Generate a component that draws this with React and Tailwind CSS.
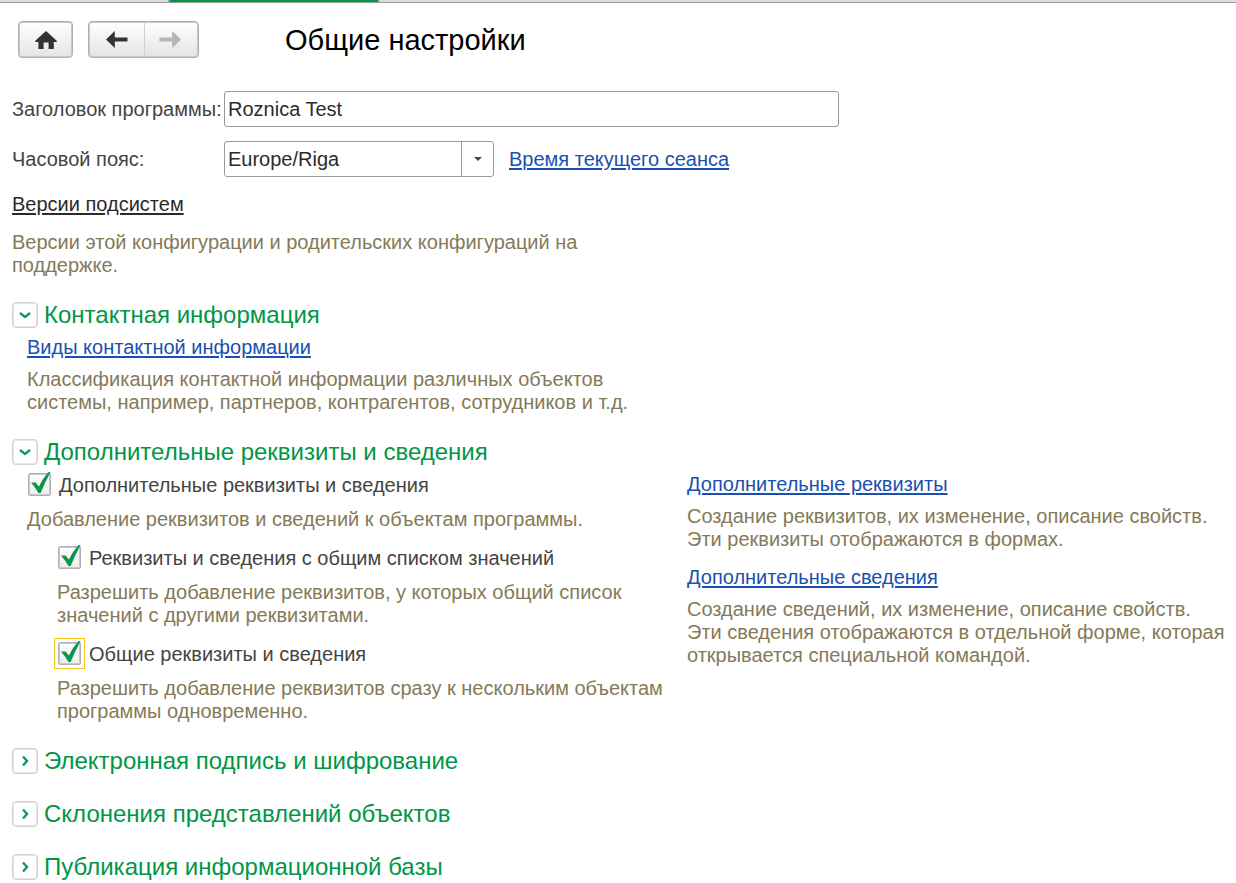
import { useState } from "react";

function TopStrip() {
  return (
    <div className="flex h-[3px] border-b border-[#9a9a9a] bg-[#dedede]">
      <div className="w-[168px]" />
      <div className="h-[2px] w-[212px] border-x-2 border-l-[#a0a0a0] border-r-[#b8b8b8] bg-[#009646]" />
    </div>
  );
}

function HomeIcon() {
  return (
    <svg width="22" height="18" viewBox="0 0 22 18" fill="#333" aria-hidden="true">
      <path d="M11 0 L22 10 L21.5 11 H18.8 V18 H13.6 V11.5 H8.6 V18 H3.4 V11 H0.5 L0 10 Z" />
    </svg>
  );
}

function ArrowIcon({ right }) {
  return (
    <svg width="22" height="17" viewBox="0 0 22 17" aria-hidden="true">
      {right ? (
        <path fill="#b5b5b5" d="M22 8.5 L13.2 0 V6.6 H0.5 V10.6 H13.2 V17 Z" />
      ) : (
        <path fill="#333" d="M0 8.5 L8.8 0 V6.6 H21.5 V10.6 H8.8 V17 Z" />
      )}
    </svg>
  );
}

function Toolbar() {
  return (
    <header className="flex items-center px-[18px] pt-[18px]">
      <button
        type="button"
        aria-label="Домой"
        className="flex h-[37px] w-[55px] items-center justify-center rounded border border-[#b0b0b0] bg-linear-to-b from-white to-[#e4e4e4] inset-ring inset-ring-[#c8c8c8]"
      >
        <HomeIcon />
      </button>
      <div className="ml-[15px] flex h-[37px] w-[111px] rounded border border-[#b0b0b0] bg-linear-to-b from-white to-[#e4e4e4] inset-ring inset-ring-[#c8c8c8]">
        <button
          type="button"
          aria-label="Назад"
          className="flex w-[56px] items-center justify-center border-r border-[#cfcfcf]"
        >
          <ArrowIcon />
        </button>
        <button
          type="button"
          aria-label="Вперед"
          disabled
          className="flex w-[53px] items-center justify-center pr-1"
        >
          <ArrowIcon right />
        </button>
      </div>
      <h1 className="ml-[86px] text-[29px] leading-8 text-black">Общие настройки</h1>
    </header>
  );
}

function Link({ children, dark }) {
  return (
    <a
      href="#"
      className={
        "block w-fit underline decoration-2 underline-offset-2 " + (dark ? "text-[#2b2b2b]" : "text-[#1a50ad]")
      }
    >
      {children}
    </a>
  );
}

function Hint({ children }) {
  return <p className="whitespace-pre text-[#857a58]">{children}</p>;
}

function Group({ title, open: initial, children }) {
  const [open, setOpen] = useState(Boolean(initial));
  return (
    <section>
      <h2>
        <button
          type="button"
          aria-expanded={open}
          onClick={() => setOpen(!open)}
          className="flex h-[26px] items-center gap-[6px] text-left text-2xl leading-[26px] text-[#009646]"
        >
          <span className="flex size-[26px] items-center justify-center rounded border border-[#d2d2d2] bg-white inset-ring inset-ring-[#e6e6e6]">
            <svg width="12" height="12" viewBox="0 0 12 12" fill="none" stroke="#14985a" strokeWidth="2.4" aria-hidden="true">
              <path d={open ? "M1 4 L6 8 L11 4" : "M4 1.5 L8 6 L4 10.5"} />
            </svg>
          </span>
          {title}
        </button>
      </h2>
      {open && children}
    </section>
  );
}

function Check({ children, focused }) {
  const [on, setOn] = useState(true);
  return (
    <label className="flex w-fit items-start gap-2 pl-px text-[#444]">
      <span className={"relative size-[23px] " + (focused ? "outline outline-offset-[3px] outline-[#f7c61e]" : "")}>
        <input
          type="checkbox"
          checked={on}
          onChange={() => setOn(!on)}
          className="block size-[23px] appearance-none rounded-xs border border-[#b0b0b0] bg-linear-to-b from-white to-[#ededed] inset-ring inset-ring-[#c8c8c8] outline-none"
        />
        {on && (
          <svg
            className="pointer-events-none absolute -top-px left-[3px]"
            width="20"
            height="21"
            viewBox="0 0 20 20"
            preserveAspectRatio="none"
            fill="#0b984d"
            aria-hidden="true"
          >
            <path d="M0 10 H4.6 L8 13.8 Q12 5.5 17.8 0 H19.6 Q14.5 9 9.6 20 H7.4 Q4.5 15 0 10 Z" />
          </svg>
        )}
      </span>
      <span className="pt-px">{children}</span>
    </label>
  );
}

export default function App() {
  return (
    <div className="bg-white font-['Liberation_Sans',Arial,sans-serif] text-xl leading-[23px] text-[#444]">
      <TopStrip />
      <Toolbar />
      <main className="px-3 pt-[33px]">
        <div className="flex items-center">
          <label htmlFor="title" className="w-[212px] shrink-0 whitespace-nowrap">
            Заголовок программы:
          </label>
          <input
            id="title"
            type="text"
            defaultValue="Roznica Test"
            className="h-9 w-full max-w-[615px] rounded-[3px] border border-[#999] px-[3px] text-[#2b2b2b] outline-none"
          />
        </div>
        <div className="mt-[14px] flex items-center">
          <label htmlFor="zone" className="w-[212px] shrink-0">
            Часовой пояс:
          </label>
          <div className="relative w-[270px]">
            <select
              id="zone"
              defaultValue="Europe/Riga"
              className="block h-9 w-full appearance-none rounded-[3px] border border-[#999] bg-white pr-9 pl-[3px] text-[#2b2b2b] outline-none"
            >
              <option>Europe/Riga</option>
            </select>
            <span className="pointer-events-none absolute inset-y-0 right-0 flex w-[33px] items-center justify-center border-l border-[#999]">
              <svg width="8" height="4" viewBox="0 0 8 4" fill="#444" aria-hidden="true">
                <path d="M0 0 H8 L4 4 Z" />
              </svg>
            </span>
          </div>
          <div className="ml-[15px]">
            <Link>Время текущего сеанса</Link>
          </div>
        </div>

        <div className="mt-4 grid gap-[15px]">
          <Link dark>Версии подсистем</Link>
          <Hint>{"Версии этой конфигурации и родительских конфигураций на\nподдержке."}</Hint>
        </div>

        <div className="mt-[25px] grid gap-[27px]">
          <div className="grid gap-[25px]">
            <Group title="Контактная информация" open>
              <div className="mt-2 grid gap-[9px] pl-[15px]">
                <Link>Виды контактной информации</Link>
                <Hint>
                  {"Классификация контактной информации различных объектов\nсистемы, например, партнеров, контрагентов, сотрудников и т.д."}
                </Hint>
              </div>
            </Group>
            <Group title="Дополнительные реквизиты и сведения" open>
              <div className="mt-2 grid grid-cols-[660px_1fr] pl-[15px]">
                <div>
                  <Check>Дополнительные реквизиты и сведения</Check>
                  <div className="mt-[11px]">
                    <Hint>Добавление реквизитов и сведений к объектам программы.</Hint>
                  </div>
                  <div className="mt-[15px] grid gap-[15px] pl-[30px]">
                    <div className="grid gap-[11px]">
                      <Check>Реквизиты и сведения с общим списком значений</Check>
                      <Hint>{"Разрешить добавление реквизитов, у которых общий список\nзначений с другими реквизитами."}</Hint>
                    </div>
                    <div className="grid gap-[11px]">
                      <Check focused>Общие реквизиты и сведения</Check>
                      <Hint>{"Разрешить добавление реквизитов сразу к нескольким объектам\nпрограммы одновременно."}</Hint>
                    </div>
                  </div>
                </div>
                <div className="grid content-start gap-[15px]">
                  <div className="grid gap-[9px]">
                    <Link>Дополнительные реквизиты</Link>
                    <Hint>{"Создание реквизитов, их изменение, описание свойств.\nЭти реквизиты отображаются в формах."}</Hint>
                  </div>
                  <div className="grid gap-[9px]">
                    <Link>Дополнительные сведения</Link>
                    <Hint>
                      {"Создание сведений, их изменение, описание свойств.\nЭти сведения отображаются в отдельной форме, которая\nоткрывается специальной командой."}
                    </Hint>
                  </div>
                </div>
              </div>
            </Group>
            <Group title="Электронная подпись и шифрование" />
          </div>
          <Group title="Склонения представлений объектов" />
          <Group title="Публикация информационной базы" />
        </div>
      </main>
    </div>
  );
}
